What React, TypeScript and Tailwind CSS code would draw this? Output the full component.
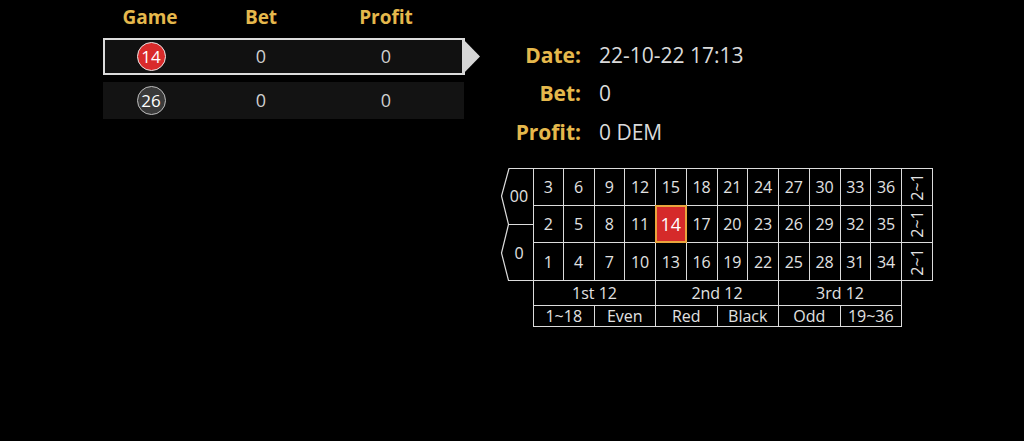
const font = { fontFamily: '"Open Sans", "Noto Sans", sans-serif' };

const history = [
  { game: 14, color: "red", bet: "0", profit: "0", active: true },
  { game: 26, color: "black", bet: "0", profit: "0", active: false },
];

const columns = [
  [3, 2, 1],
  [6, 5, 4],
  [9, 8, 7],
  [12, 11, 10],
  [15, 14, 13],
  [18, 17, 16],
  [21, 20, 19],
  [24, 23, 22],
  [27, 26, 25],
  [30, 29, 28],
  [33, 32, 31],
  [36, 35, 34],
];

const Ball = ({ n, color }: { n: number; color: string }) => (
  <div
    className={
      color === "red"
        ? "w-[29px] h-[29px] rounded-full border-[1.5px] border-[#e8e8e8] bg-[#d92b2b] flex items-center justify-center text-white text-[17px] leading-none"
        : "w-[29px] h-[29px] rounded-full border-[1.5px] border-[#bdbdbd] bg-[#3a3a3a] flex items-center justify-center text-white text-[17px] leading-none"
    }
  >
    {n}
  </div>
);

const HistoryTable = () => (
  <div className="ml-[103px] w-[361px] shrink-0">
    <div className="grid grid-cols-[94px_128px_122px] h-[34px] items-center text-[19px] font-bold text-[#e5b84c]">
      <div className="text-center">Game</div>
      <div className="text-center">Bet</div>
      <div className="text-center">Profit</div>
    </div>
    <div className="mt-[4px] flex flex-col gap-[7px]">
      {history.map((row) => (
        <div
          key={row.game}
          className={
            row.active
              ? "relative h-[37px] bg-[#111] border-2 border-[#dcdcdc] grid grid-cols-[92px_128px_122px] items-center -mr-px"
              : "relative h-[37px] bg-[#131313] px-[2px] grid grid-cols-[92px_128px_122px] items-center"
          }
        >
          <div className="flex justify-center">
            <Ball n={row.game} color={row.color} />
          </div>
          <div className="text-center text-[18px] text-[#cfcfcf]">{row.bet}</div>
          <div className="text-center text-[18px] text-[#cfcfcf]">{row.profit}</div>
          {row.active && (
            <svg
              className="absolute left-full top-[-2px] ml-[-1px]"
              width="19"
              height="37"
              viewBox="0 0 19 37"
            >
              <polygon points="0,0 18,18.5 0,37" fill="#d6d6d6" />
            </svg>
          )}
        </div>
      ))}
    </div>
  </div>
);

const InfoRow = ({ label, value }: { label: string; value: string }) => (
  <div className="flex items-center h-[38.5px]">
    <div className="w-[81px] text-right font-bold text-[21px] text-[#e5b84c]">{label}</div>
    <div className="ml-[18px] text-[21px] text-[#dadada]">{value}</div>
  </div>
);

const cell = "flex items-center justify-center border-r border-b border-[#dcdcdc] text-[16px] text-[#e2e2e2] leading-none";

const Board = () => (
  <div className="grid grid-cols-[33px_repeat(12,30.75px)_31px] grid-rows-[37.67px_37.67px_37.67px_25px_21px]">
    <div className="row-start-1 row-span-3 col-start-1 relative">
      <svg className="absolute inset-0" width="33" height="113" viewBox="0 0 33 113">
        <path
          d="M33,0.5 H9 L1.5,28 L8.5,56.5 H33 M8.5,56.5 L1.5,85 L8.5,112.5 H33"
          fill="none"
          stroke="#dcdcdc"
          strokeWidth="1.2"
        />
      </svg>
      <div className="absolute left-[5px] right-0 top-0 h-[56.5px] flex items-center justify-center text-[16px] text-[#e2e2e2]">
        00
      </div>
      <div className="absolute left-[5px] right-0 top-[56.5px] h-[56.5px] flex items-center justify-center text-[16px] text-[#e2e2e2]">
        0
      </div>
    </div>
    {columns.map((col, ci) =>
      col.map((n, ri) => (
        <div
          key={n}
          className={[
            cell,
            "relative",
            ri === 0 ? "border-t" : "",
            ci === 0 ? "border-l" : "",
          ].join(" ")}
          style={{ gridColumnStart: ci + 2, gridRowStart: ri + 1 }}
        >
          {n === 14 && (
            <div className="absolute -left-px -top-px -right-px -bottom-px bg-[#d52a2a] border-2 border-[#e9a53d]" />
          )}
          <span className={n === 14 ? "relative text-white text-[18px] font-medium" : "relative"}>{n}</span>
        </div>
      ))
    )}
    {[1, 2, 3].map((r) => (
      <div
        key={r}
        className={cell + (r === 1 ? " border-t" : "")}
        style={{ gridColumnStart: 14, gridRowStart: r }}
      >
        <span className="-rotate-90 whitespace-nowrap">2~1</span>
      </div>
    ))}
    <div className={cell + " border-l row-start-4 col-start-2 col-span-4"}>1st 12</div>
    <div className={cell + " row-start-4 col-start-6 col-span-4"}>2nd 12</div>
    <div className={cell + " row-start-4 col-start-10 col-span-4"}>3rd 12</div>
    <div className={cell + " border-l row-start-5 col-start-2 col-span-2"}>1~18</div>
    <div className={cell + " row-start-5 col-start-4 col-span-2"}>Even</div>
    <div className={cell + " row-start-5 col-start-6 col-span-2"}>Red</div>
    <div className={cell + " row-start-5 col-start-8 col-span-2"}>Black</div>
    <div className={cell + " row-start-5 col-start-10 col-span-2"}>Odd</div>
    <div className={cell + " row-start-5 col-start-12 col-span-2"}>19~36</div>
  </div>
);

export default function App() {
  return (
    <div className="w-[1024px] h-[441px] bg-black flex overflow-hidden" style={font}>
      <HistoryTable />
      <div className="ml-[36px] flex flex-col">
        <div className="mt-[36px]">
          <InfoRow label="Date:" value="22-10-22 17:13" />
          <InfoRow label="Bet:" value="0" />
          <InfoRow label="Profit:" value="0 DEM" />
        </div>
        <div className="mt-[16.5px]">
          <Board />
        </div>
      </div>
    </div>
  );
}
